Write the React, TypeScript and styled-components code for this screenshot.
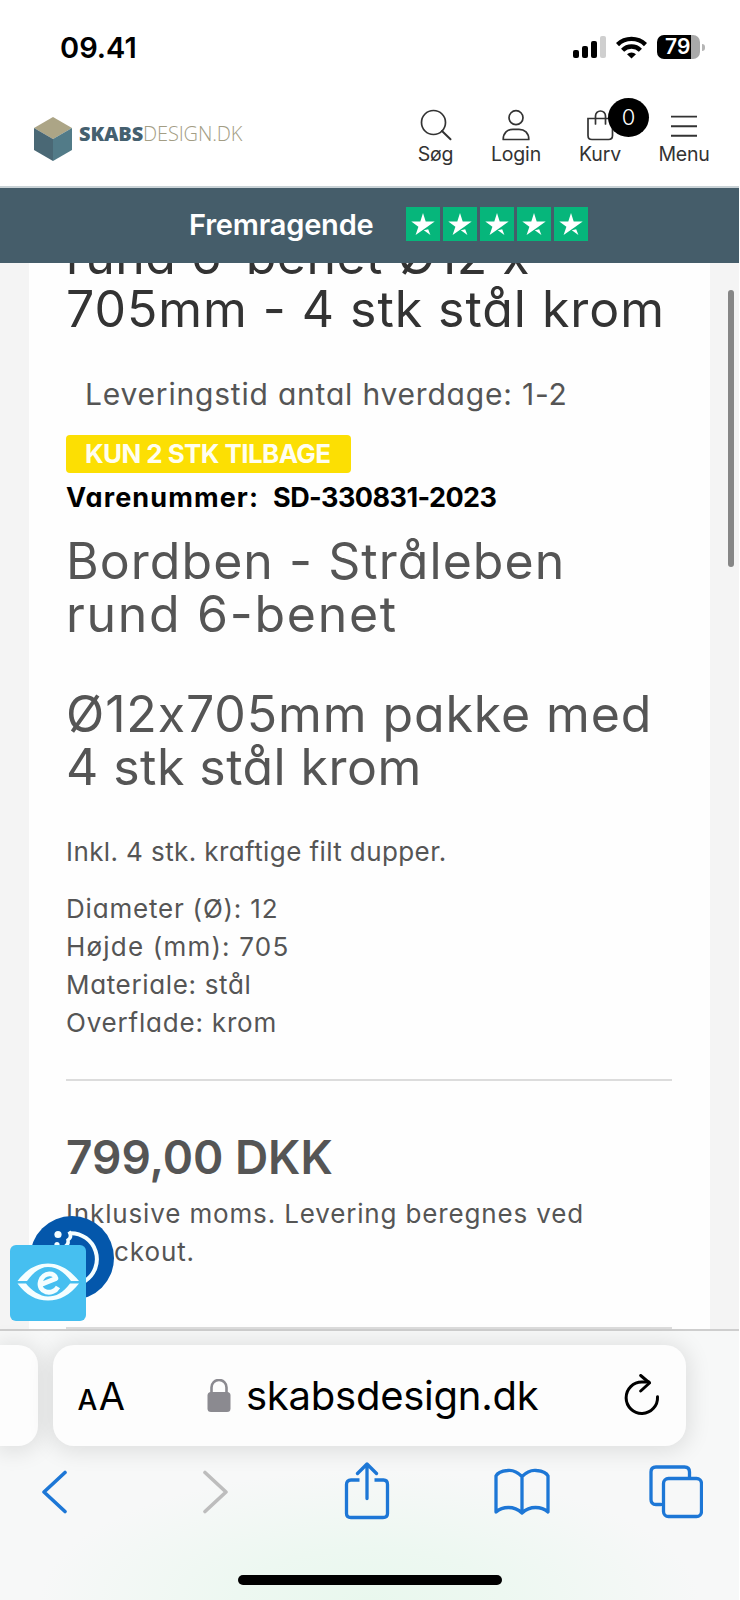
import React from "react";
import styled, { createGlobalStyle, css } from "styled-components";

const GlobalStyle = createGlobalStyle`
  body {
    margin: 0;
    background: #fff;
    font-family: Inter, "Liberation Sans", sans-serif;
  }
  *, *::before, *::after { box-sizing: border-box; }
  h1, h2, p { margin: 0; font-weight: 400; }
  svg { display: block; flex: none; }
`;

const Phone = styled.div`
  display: flex;
  flex-direction: column;
  width: 739px;
  height: 1600px;
  overflow: hidden;
  position: relative;
`;

/* Status bar */
const StatusBar = styled.div`
  display: flex;
  align-items: center;
  justify-content: space-between;
  height: 94px;
  padding: 0 34px 0 60px;
`;
const Clock = styled.span`
  font-size: 29px;
  font-weight: 600;
  color: #000;
`;
const StatusIcons = styled.div`
  display: flex;
  align-items: center;
  gap: 10px;
`;
const Battery = styled.div`
  display: flex;
  align-items: center;
  gap: 2px;
`;
const BatteryBody = styled.div`
  width: 43px;
  height: 24px;
  border-radius: 7px;
  background: linear-gradient(90deg, #000 34px, #a9a9a9 34px);
  color: #fff;
  font-size: 21px;
  font-weight: 600;
  line-height: 24px;
  padding-left: 8px;
`;
const BatteryNub = styled.div`
  width: 3px;
  height: 7px;
  border-radius: 0 3px 3px 0;
  background: #b5b5b5;
`;

/* Shop header */
const Header = styled.header`
  display: flex;
  justify-content: space-between;
  height: 94px;
  padding: 0 14px 0 34px;
  border-bottom: 2px solid #c9d2d6;
`;
const Logo = styled.div`
  display: flex;
  align-items: flex-start;
  gap: 7px;
  padding-top: 23px;
`;
const LogoText = styled.div`
  padding-top: 3px;
  font-family: "Open Sans", sans-serif;
  font-size: 20px;
  line-height: 28px;
  font-weight: 300;
  letter-spacing: -0.15px;
  color: #a39d84;
`;
const LogoStrong = styled.b`
  font-weight: 800;
  color: #45606f;
`;
const Nav = styled.nav`
  display: grid;
  grid-template-columns: 79px 82px 86px 82px;
  padding-top: 15px;
`;
const NavItem = styled.a`
  display: flex;
  flex-direction: column;
  align-items: center;
  position: relative;
  color: #333;
`;
const NavLabel = styled.span`
  font-size: 19.5px;
  line-height: 24px;
  letter-spacing: -0.2px;
  margin-top: 1px;
`;
const CartCount = styled.span`
  position: absolute;
  left: 51px;
  top: -11px;
  width: 41px;
  height: 39px;
  border-radius: 50%;
  background: #000;
  color: #fff;
  font-size: 22px;
  font-weight: 300;
  line-height: 38px;
  text-align: center;
`;

/* Rating strip */
const RatingBar = styled.div`
  display: flex;
  align-items: center;
  height: 75px;
  padding: 0 0 3px 189px;
  gap: 32px;
  background: #455d6a;
  color: #fff;
  font-size: 29px;
  font-weight: 600;
  letter-spacing: -0.2px;
  flex: none;
`;
const Stars = styled.div`
  display: flex;
  gap: 3px;
`;
const StarTile = styled.span`
  display: grid;
  place-items: center;
  width: 34px;
  height: 34px;
  background: #06b67b;
`;

/* Product page */
const Page = styled.main`
  height: 1066px;
  flex: none;
  padding: 0 29px;
  background: #f4f4f4;
  overflow: hidden;
`;
const Card = styled.section`
  display: flex;
  flex-direction: column;
  align-items: stretch;
  width: 681px;
  height: 100%;
  padding: 0 38px 0 37px;
  background: #fefefe;
  color: #555;
  overflow: hidden;
  font-feature-settings: "cv11" 1, "calt" 0;
`;
const Line = styled.span<{ $track: number }>`
  display: block;
  white-space: pre;
  letter-spacing: ${(p) => p.$track}px;
`;
const headingText = css`
  font-size: 50px;
  line-height: 53px;
`;
const Title = styled.h1`
  ${headingText}
  margin-top: -33px;
  color: #333;
`;
const Delivery = styled.p`
  margin-top: 38.5px;
  padding-left: 19px;
  font-size: 30px;
  line-height: 38px;
`;
const StockBadge = styled.div`
  width: 285px;
  height: 37.5px;
  margin-top: 22.5px;
  padding-left: 19px;
  border-radius: 4px;
  background: #fcdf03;
  color: #fffef0;
  font-size: 26px;
  font-weight: 700;
  line-height: 37px;
`;
const Sku = styled.div`
  display: flex;
  gap: 14px;
  margin-top: 6px;
  color: #000;
  font-size: 27px;
  font-weight: 700;
  line-height: 38px;
`;
const Subtitle = styled.h2<{ $gap: number }>`
  ${headingText}
  margin-top: ${(p) => p.$gap}px;
`;
const Text = styled.p<{ $gap: number }>`
  margin-top: ${(p) => p.$gap}px;
  font-size: 26px;
  line-height: 38px;
`;
const Rule = styled.div<{ $gap: number }>`
  height: 2px;
  flex: none;
  margin-top: ${(p) => p.$gap}px;
  background: #dcdcdc;
`;
const Price = styled.p`
  margin-top: 48px;
  font-size: 46px;
  font-weight: 600;
  line-height: 56px;
`;
const ScrollThumb = styled.div`
  position: absolute;
  left: 728px;
  top: 290px;
  width: 6px;
  height: 277px;
  border-radius: 3px;
  background: #868686;
`;
const CookieButton = styled.button`
  position: absolute;
  left: 30px;
  top: 1215.5px;
  width: 84px;
  height: 84px;
  padding: 0;
  border: 0;
  border-radius: 50%;
  background: #0457ab;
`;
const EmarkButton = styled.button`
  position: absolute;
  left: 9.5px;
  top: 1244.5px;
  width: 76px;
  height: 76px;
  padding: 0;
  border: 0;
  border-radius: 6px;
  background: #46bff0;
`;

/* Browser chrome */
const Browser = styled.footer`
  display: flex;
  flex-direction: column;
  align-items: center;
  flex: 1;
  border-top: 2px solid #cecece;
  background:
    radial-gradient(ellipse 330px 130px at 50% 100%, #e9f8ee 0%, #edf8f1 40%, rgba(247, 248, 248, 0) 100%),
    #f7f8f8;
`;
const TabStrip = styled.div`
  display: flex;
  gap: 15px;
  width: 100%;
  padding-top: 14px;
`;
const tabSurface = css`
  height: 101px;
  background: #fdfdfd;
  box-shadow: 0 2px 22px 4px rgba(0, 0, 0, 0.1);
`;
const PreviousTab = styled.div`
  ${tabSurface}
  width: 38px;
  border-radius: 0 20px 20px 0;
`;
const AddressBar = styled.div`
  ${tabSurface}
  display: grid;
  grid-template-columns: 149px 1fr 62px;
  align-items: center;
  width: 633px;
  border-radius: 21px;
`;
const TextSize = styled.div`
  display: flex;
  align-items: baseline;
  gap: 1.5px;
  padding-left: 24.5px;
  color: #000;
  line-height: 1;
`;
const Letter = styled.span<{ $size: number; $weight: number }>`
  font-size: ${(p) => p.$size}px;
  font-weight: ${(p) => p.$weight};
`;
const Address = styled.div`
  display: flex;
  align-items: center;
  gap: 15px;
  padding-left: 5px;
  font-size: 40px;
  letter-spacing: -0.25px;
  color: #000;
`;
const Toolbar = styled.div`
  display: grid;
  grid-template-columns: 108px 215px 87px 223px 86px;
  align-items: center;
  justify-items: center;
  width: 100%;
  height: 60px;
  margin-top: 15.5px;
`;
const HomeIndicator = styled.div`
  width: 264px;
  height: 10px;
  margin-top: 53.5px;
  border-radius: 5px;
  background: #000;
`;

const BLUE = "#1d77d6";

const SignalIcon = () => (
  <svg width="33" height="22" viewBox="0 0 33 22">
    <rect x="0" y="14" width="6" height="8" rx="2" />
    <rect x="9" y="10" width="6" height="12" rx="2" />
    <rect x="18" y="5" width="6" height="17" rx="2" />
    <rect x="27" y="0" width="6" height="22" rx="2" fill="#cfcfcf" />
  </svg>
);

const WifiIcon = () => (
  <svg width="31" height="23" viewBox="0 0 31 23" fill="none" stroke="#000" strokeWidth="4.4">
    <path d="M1.5 8.6A20 20 0 0 1 29.5 8.6" />
    <path d="M6.6 14.2A12.6 12.6 0 0 1 24.4 14.2" />
    <path d="M15.5 22.5L11 18.2A6.5 6.5 0 0 1 20 18.2Z" fill="#000" stroke="none" />
  </svg>
);

const CubeIcon = () => (
  <svg width="38" height="44" viewBox="0 0 38 44">
    <path d="M19 0L38 11L19 22L0 11Z" fill="#aca586" />
    <path d="M0 11L19 22V44L0 33Z" fill="#4a6875" />
    <path d="M38 11L19 22V44L38 33Z" fill="#527b88" />
  </svg>
);

const navIcon = { width: 32, height: 32, viewBox: "0 0 32 32", fill: "none", stroke: "#333", strokeWidth: 1.7, strokeLinecap: "round" as const };

const SearchIcon = () => (
  <svg {...navIcon}>
    <circle cx="13.5" cy="13.5" r="12" />
    <path d="M22 22L30.5 30.2" strokeWidth="2" />
  </svg>
);
const UserIcon = () => (
  <svg {...navIcon}>
    <circle cx="16" cy="8.7" r="7" />
    <path d="M3.2 30.5C3.2 24 7.5 20.3 13 20.3H19C24.5 20.3 28.8 24 28.8 30.5Z" strokeLinejoin="round" />
  </svg>
);
const BagIcon = () => (
  <svg {...navIcon}>
    <path d="M4 9.5H28.5V26.5Q28.5 30.5 24.5 30.5H8Q4 30.5 4 26.5Z" />
    <path d="M11.5 15V7A5 5 0 0 1 21.5 7V15" />
  </svg>
);
const MenuIcon = () => (
  <svg {...navIcon}>
    <path d="M3 7.6H29M3 17.2H29M3 26.8H29" strokeWidth="1.9" strokeLinecap="butt" />
  </svg>
);
const StarIcon = () => (
  <svg width="24" height="23" viewBox="0 0 24 23" fill="#fff">
    <path d="M12 0L14.7 8.5H23.7L16.4 13.7L4.600 22L7.400 13.700L0.300 8.500H9.300Z" />
    <path d="M12.800 17.200L17.200 16.200L19.400 22Z" />
  </svg>
);
const CookieIcon = () => (
  <svg width="84" height="84" viewBox="0 0 84 84" fill="none">
    <path d="M40 17.2A26 26 0 0 1 55 65" stroke="#f4feff" strokeWidth="4" />
    <path d="M39 15.500Q42.500 21 38 24Q39 29 34 31" stroke="#f4feff" strokeWidth="3.500" />
    <circle cx="28" cy="18.500" r="3.600" fill="#f4feff" />
    <circle cx="27" cy="28.500" r="2.600" fill="#f4feff" />
  </svg>
);
const EyeIcon = () => (
  <svg width="76" height="76" viewBox="0 0 76 76">
    <path d="M7.500 36C16 25 26 18.500 38 18.500S60 25 69 36H61C54 27 47 22 38 22S22 29 17 36Z" fill="#f5feff" />
    <path d="M7.500 38.500C16 50 26 55.500 38 55.500S60 50 69 38.500H60C53 48 46 51.500 38 51.500S21 45 16 38.500Z" fill="#f5feff" />
    <path d="M31 39.500L46 33.500C45 27.500 34 26.500 30.500 36C27 48 43 51 48 42" fill="none" stroke="#f5feff" strokeWidth="4.800" strokeLinejoin="round" />
  </svg>
);
const LockIcon = () => (
  <svg width="24" height="33" viewBox="0 0 24 33">
    <rect x="0.500" y="13" width="23" height="20" rx="3.500" fill="#8b8a90" />
    <path d="M4.500 14V8.500A7.500 7.500 0 0 1 19.500 8.500V14" fill="none" stroke="#8b8a90" strokeWidth="2.600" />
  </svg>
);
const ReloadIcon = () => (
  <svg width="36" height="44" viewBox="0 0 36 44" fill="none" stroke="#000" strokeWidth="3" strokeLinecap="round" strokeLinejoin="round">
    <path d="M33.500 22.800A15.700 15.700 0 1 1 18 8H25" />
    <path d="M16.700 1.500L25.500 9L16.700 17" />
  </svg>
);
const ChevronIcon = ({ forward = false }: { forward?: boolean }) => (
  <svg width="28" height="44" viewBox="0 0 28 44" fill="none" stroke={forward ? "#bdbdbd" : BLUE} strokeWidth="3.600" strokeLinecap="round" strokeLinejoin="round">
    <path d={forward ? "M3 2.5L24 22L3 41.5" : "M25 2.5L4 22L25 41.5"} />
  </svg>
);
const toolIcon = { fill: "none", stroke: BLUE, strokeWidth: 3.3, strokeLinecap: "round" as const, strokeLinejoin: "round" as const };
const ShareIcon = () => (
  <svg width="46" height="60" viewBox="0 0 46 60" {...toolIcon}>
    <path d="M15.500 18H7Q2.500 18 2.500 22.500V51.500Q2.500 55.500 7 55.500H39Q43.500 55.500 43.500 51.500V22.500Q43.500 18 39.500 18H30.500" strokeLinecap="butt" />
    <path d="M23 36.500V3M13.500 11.500L23 2L32.500 11.500" />
  </svg>
);
const BookIcon = () => (
  <svg width="56" height="48" viewBox="0 0 56 48" {...toolIcon}>
    <path d="M28 8.500Q21 1.500 13.500 2.500Q4 3.500 2 8V44Q7 39.500 14.500 39.500Q22 39.500 28 45Q34 39.500 41.500 39.500Q49 39.500 54 44V8Q52 3.500 42.500 2.500Q35 1.500 28 8.500V45" />
  </svg>
);
const TabsIcon = () => (
  <svg width="54" height="54" viewBox="0 0 54 54" {...toolIcon}>
    <path d="M12 39.500H7Q2 39.500 2 34.500V7Q2 2 7 2H35.500Q40.500 2 40.500 7V12" />
    <rect x="14.500" y="13.500" width="38" height="38" rx="5" />
  </svg>
);

export default function App() {
  return (
    <>
      <GlobalStyle />
      <Phone>
        <StatusBar>
          <Clock>09.41</Clock>
          <StatusIcons>
            <SignalIcon />
            <WifiIcon />
            <Battery>
              <BatteryBody>79</BatteryBody>
              <BatteryNub />
            </Battery>
          </StatusIcons>
        </StatusBar>

        <Header>
          <Logo>
            <CubeIcon />
            <LogoText>
              <LogoStrong>SKABS</LogoStrong>DESIGN.DK
            </LogoText>
          </Logo>
          <Nav>
            <NavItem><SearchIcon /><NavLabel>Søg</NavLabel></NavItem>
            <NavItem><UserIcon /><NavLabel>Login</NavLabel></NavItem>
            <NavItem><BagIcon /><NavLabel>Kurv</NavLabel><CartCount>0</CartCount></NavItem>
            <NavItem><MenuIcon /><NavLabel>Menu</NavLabel></NavItem>
          </Nav>
        </Header>

        <RatingBar>
          <span>Fremragende</span>
          <Stars>
            {[1, 2, 3, 4, 5].map((n) => (
              <StarTile key={n}><StarIcon /></StarTile>
            ))}
          </Stars>
        </RatingBar>

        <Page>
          <Card>
            <Title>
              <Line $track={0.45}>rund 6-benet Ø12 x</Line>
              <Line $track={0.95}>705mm - 4 stk stål krom</Line>
            </Title>
            <Delivery>
              <Line $track={0.8}>Leveringstid antal hverdage: 1-2</Line>
            </Delivery>
            <StockBadge>
              <Line $track={-0.6}>KUN 2 STK TILBAGE</Line>
            </StockBadge>
            <Sku>
              <Line $track={1.1}>Varenummer:</Line>
              <Line $track={-0.55}>SD-330831-2023</Line>
            </Sku>
            <Subtitle $gap={18}>
              <Line $track={1.05}>Bordben - Stråleben</Line>
              <Line $track={1.7}>rund 6-benet</Line>
            </Subtitle>
            <Subtitle $gap={47}>
              <Line $track={0.9}>Ø12x705mm pakke med</Line>
              <Line $track={0.45}>4 stk stål krom</Line>
            </Subtitle>
            <Text $gap={39}>
              <Line $track={0.4}>Inkl. 4 stk. kraftige filt dupper.</Line>
            </Text>
            <Text $gap={19}>
              <Line $track={0.8}>Diameter (Ø): 12</Line>
              <Line $track={1.2}>Højde (mm): 705</Line>
              <Line $track={0.65}>Materiale: stål</Line>
              <Line $track={0.8}>Overflade: krom</Line>
            </Text>
            <Rule $gap={37} />
            <Price>
              <Line $track={-0.05}>799,00 DKK</Line>
            </Price>
            <Text $gap={10}>
              <Line $track={0.85}>Inklusive moms. Levering beregnes ved</Line>
              <Line $track={0.9}>checkout.</Line>
            </Text>
            <Rule $gap={56} />
          </Card>
        </Page>

        <Browser>
          <TabStrip>
            <PreviousTab />
            <AddressBar>
              <TextSize>
                <Letter $size={28} $weight={500}>A</Letter>
                <Letter $size={38} $weight={400}>A</Letter>
              </TextSize>
              <Address>
                <LockIcon />
                <span>skabsdesign.dk</span>
              </Address>
              <ReloadIcon />
            </AddressBar>
          </TabStrip>
          <Toolbar>
            <ChevronIcon />
            <ChevronIcon forward />
            <ShareIcon />
            <BookIcon />
            <TabsIcon />
          </Toolbar>
          <HomeIndicator />
        </Browser>

        <ScrollThumb />
        <CookieButton><CookieIcon /></CookieButton>
        <EmarkButton><EyeIcon /></EmarkButton>
      </Phone>
    </>
  );
}
